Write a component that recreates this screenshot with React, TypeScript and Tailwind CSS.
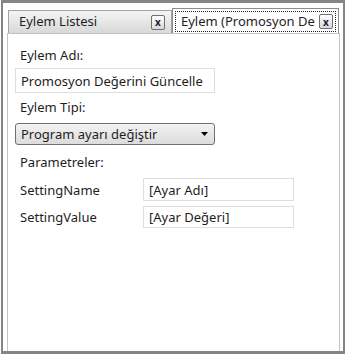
import React from "react";

const font = { fontFamily: '"Noto Sans", "Open Sans", sans-serif' };

function CloseBtn() {
  return (
    <div className="flex h-[15px] w-[14px] items-center justify-center rounded-[2px] border border-[#6f6f6f] bg-gradient-to-b from-[#ffffff] to-[#d9d9d9] text-[10px] font-bold leading-none text-[#1c1c3a]">
      x
    </div>
  );
}

export default function App() {
  return (
    <div className="h-[354px] w-[345px] bg-white pl-[1px] text-[#1e1e1e]" style={font}>
      <div className="flex h-full w-full flex-col border-t-[3px] border-l-[2px] border-r-[2px] border-b-[3px] border-[#858585]">
        <div className="flex h-[30px] items-end pl-[5px]">
          <div className="flex h-[23px] w-[164px] items-center justify-between border border-b-0 border-[#a3a3a3] bg-gradient-to-b from-[#f5f5f5] to-[#d8d8d8] pl-[10px] pr-[6px] text-[13px]">
            <span>Eylem Listesi</span>
            <CloseBtn />
          </div>
          <div className="mb-[-1px] flex h-[26px] w-[167px] items-center border border-b-0 border-[#8c8c8c] bg-white p-[2px] text-[13px]">
            <div className="flex h-full w-full items-center overflow-hidden border border-dotted border-[#202020] pl-[5px] pr-[2px]">
              <span className="min-w-0 flex-1 overflow-hidden whitespace-nowrap">Eylem (Promosyon De</span>
              <div className="shrink-0">
                <CloseBtn />
              </div>
            </div>
          </div>
        </div>
        <div className="ml-[4px] mr-[3px] flex flex-1 flex-col border border-b-0 border-[#c4c4c4] pl-[7px] pt-[12px] text-[13px] leading-[18px]">
          <div className="pl-[5px]">Eylem Adı:</div>
          <div className="mt-[4px] flex h-[25px] w-[200px] items-center border border-[#dedede] pl-[5px]">
            Promosyon Değerini Güncelle
          </div>
          <div className="mt-[5px] pl-[5px]">Eylem Tipi:</div>
          <div className="mt-[7px] flex h-[22px] w-[200px] items-center justify-between rounded-[3px] border border-[#707070] bg-gradient-to-b from-[#f3f3f3] to-[#dcdcdc] pl-[5px] pr-[6px]">
            <span>Program ayarı değiştir</span>
            <svg width="7" height="4" viewBox="0 0 7 4">
              <path d="M0 0 H7 L3.5 4 Z" fill="#000" />
            </svg>
          </div>
          <div className="mt-[8px] pl-[5px]">Parametreler:</div>
          <div className="mt-[7px] flex items-center">
            <div className="w-[128px] pl-[5px]">SettingName</div>
            <div className="flex h-[23px] w-[151px] items-center border border-[#dedede] pl-[5px]">[Ayar Adı]</div>
          </div>
          <div className="mt-[5px] flex items-center">
            <div className="w-[128px] pl-[5px]">SettingValue</div>
            <div className="flex h-[22px] w-[151px] items-center border border-[#dedede] pl-[5px]">[Ayar Değeri]</div>
          </div>
        </div>
      </div>
    </div>
  );
}
